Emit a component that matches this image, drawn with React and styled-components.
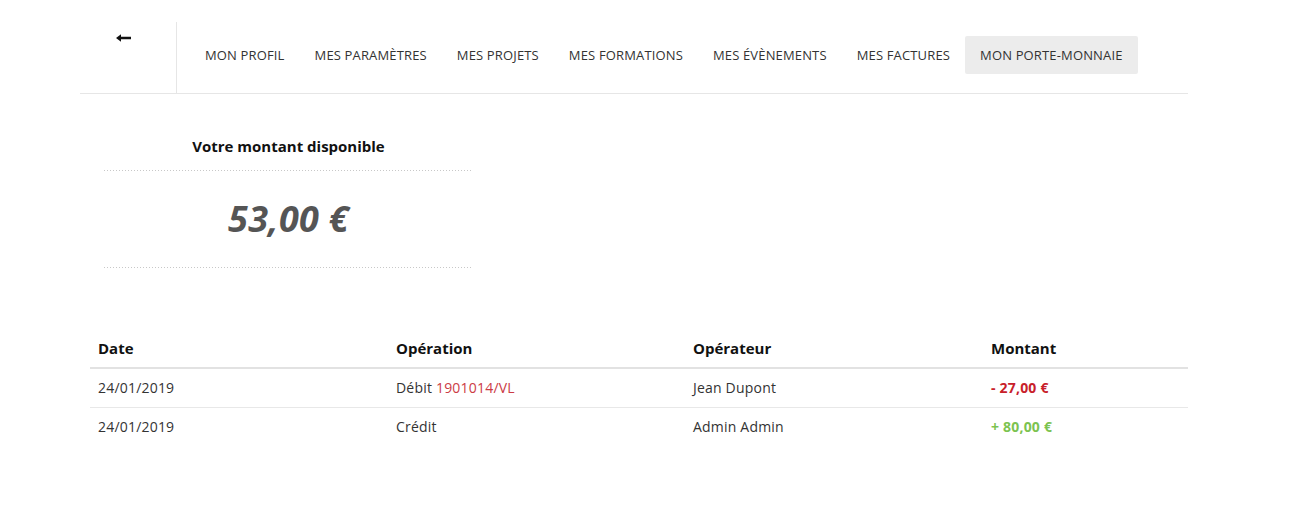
import React from 'react';
import styled, { createGlobalStyle } from 'styled-components';

const GlobalStyle = createGlobalStyle`
  body {
    margin: 0;
    background: #fff;
    font-family: "Open Sans", "Liberation Sans", sans-serif;
    color: #333;
  }
`;

const Page = styled.div`
  width: 1108px;
  padding: 22px 0 40px 80px;
`;

const Nav = styled.nav`
  display: flex;
  height: 71px;
  border-bottom: 1px solid #e6e6e6;
`;

const BackCell = styled.div`
  width: 97px;
  border-right: 1px solid #e6e6e6;
  display: flex;
  justify-content: center;
  align-items: flex-start;
  padding-top: 12px;
  padding-right: 10px;
  box-sizing: border-box;
`;

const Tabs = styled.ul`
  display: flex;
  list-style: none;
  margin: 0;
  padding: 14px 0 0 13px;
  align-items: flex-start;
`;

const Tab = styled.li`
  font-size: 13px;
  letter-spacing: 0.15px;
  line-height: 18px;
  padding: 10px 15px 10px;
  text-transform: uppercase;
  color: #333;
  background: ${p => (p.active ? '#ececec' : 'transparent')};
  border-radius: 2px;
  cursor: pointer;
`;

const Card = styled.div`
  width: 369px;
  margin: 42px 0 0 24px;
  display: flex;
  flex-direction: column;
  align-items: center;
`;

const CardTitle = styled.div`
  font-size: 15px;
  font-weight: 700;
  line-height: 20px;
  color: #111;
`;

const Dots = styled.div`
  align-self: stretch;
  height: 1px;
  margin: ${p => p.top || 0}px 0 ${p => p.bottom || 0}px;
  background: repeating-linear-gradient(to right, #c8c8c8 0 1px, transparent 1px 3px);
`;

const Amount = styled.div`
  font-size: 36px;
  font-weight: 700;
  font-style: italic;
  line-height: 50px;
  color: #555;
  margin-top: 23px;
  letter-spacing: 0.3px;
`;

const Table = styled.div`
  margin: 61px 0 0 10px;
  width: 1098px;
`;

const Row = styled.div`
  display: grid;
  grid-template-columns: 298px 297px 298px 1fr;
  border-bottom: ${p => (p.head ? '2px solid #e2e2e2' : 'none')};
  border-top: ${p => (p.divider ? '1px solid #e8e8e8' : 'none')};
`;

const Cell = styled.div`
  padding: 8px 8px;
  font-size: ${p => (p.head ? 15 : 14)}px;
  letter-spacing: ${p => (p.head ? 0 : 0.2)}px;
  line-height: 22px;
  font-weight: ${p => (p.head || p.amount ? 700 : 400)};
  color: ${p => (p.head ? '#111' : p.color || '#333')};
`;

const Ref = styled.span`
  color: #cc3b45;
`;

function BackArrow() {
  return (
    <svg width="15" height="8" viewBox="0 0 15 8">
      <path d="M0 4 L5 0.3 L5 2.7 L15 2.7 L15 5.3 L5 5.3 L5 7.7 Z" fill="#111" />
    </svg>
  );
}

const tabs = [
  'Mon profil',
  'Mes paramètres',
  'Mes projets',
  'Mes formations',
  'Mes évènements',
  'Mes factures',
  'Mon porte-monnaie',
];

const rows = [
  { date: '24/01/2019', op: 'Débit', ref: '1901014/VL', who: 'Jean Dupont', amount: '- 27,00 €', color: '#c8202a' },
  { date: '24/01/2019', op: 'Crédit', who: 'Admin Admin', amount: '+ 80,00 €', color: '#7cc350' },
];

export default function App() {
  return (
    <>
      <GlobalStyle />
      <Page>
        <Nav>
          <BackCell>
            <BackArrow />
          </BackCell>
          <Tabs>
            {tabs.map((t, i) => (
              <Tab key={t} active={i === tabs.length - 1}>{t}</Tab>
            ))}
          </Tabs>
        </Nav>

        <Card>
          <CardTitle>Votre montant disponible</CardTitle>
          <Dots top={14} />
          <Amount>53,00 €</Amount>
          <Dots top={23} />
        </Card>

        <Table>
          <Row head>
            <Cell head>Date</Cell>
            <Cell head>Opération</Cell>
            <Cell head>Opérateur</Cell>
            <Cell head>Montant</Cell>
          </Row>
          {rows.map((r, i) => (
            <Row key={i} divider={i > 0}>
              <Cell>{r.date}</Cell>
              <Cell>
                {r.op}
                {r.ref && <> <Ref>{r.ref}</Ref></>}
              </Cell>
              <Cell>{r.who}</Cell>
              <Cell amount color={r.color}>{r.amount}</Cell>
            </Row>
          ))}
        </Table>
      </Page>
    </>
  );
}
